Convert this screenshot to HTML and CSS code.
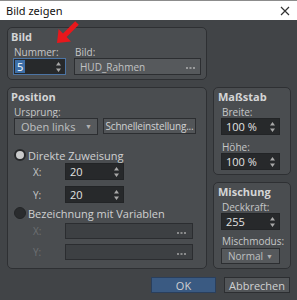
FILE: index.html
```html
<!DOCTYPE html>
<html lang="de">
<head>
  <meta charset="UTF-8">
  <title>Bild zeigen</title>
  <link rel="stylesheet" href="styles.css">
</head>
<body>
  <div class="window">
    <div class="titlebar">
      <span class="title">Bild zeigen</span>
      <svg class="close" width="10" height="10" viewBox="0 0 10 10"><path d="M1 1 L9 9 M9 1 L1 9" stroke="#333" stroke-width="1.2"/></svg>
    </div>

    <div class="content">
      <div class="columns">
        <div class="col-left">
          <section class="group group-bild">
            <div class="group-title">Bild</div>
            <div class="bild-row">
              <div class="nummer-col">
                <div class="label">Nummer:</div>
                <div class="spin spin-focus">
                  <span class="sel">5</span>
                  <svg class="spin-arrows" width="5" height="10" viewBox="0 0 5 10"><path d="M2.5 0 L5 3.5 L0 3.5 Z M2.5 10 L5 6.5 L0 6.5 Z" fill="#a8a8a8"/></svg>
                </div>
              </div>
              <div class="bild-col">
                <div class="label">Bild:</div>
                <div class="picker"><span>HUD_Rahmen</span>
                  <svg class="dots" width="9" height="2" viewBox="0 0 9 2"><path d="M0 0h2v2H0zM3.5 0h2v2h-2zM7 0h2v2H7z" fill="#9a9b9c"/></svg>
                </div>
              </div>
            </div>
          </section>

          <section class="group group-position">
            <div class="group-title">Position</div>
            <div class="label">Ursprung:</div>
            <div class="pos-row">
              <div class="combo combo-origin"><span>Oben links</span><span class="caret">▼</span></div>
              <div class="btn btn-quick">Schnelleinstellung...</div>
            </div>

            <div class="radio-row radio-first">
              <span class="radio radio-on"></span>
              <span>Direkte Zuweisung</span>
            </div>
            <div class="coord-row coord-x">
              <span class="coord-label">X:</span>
              <div class="spin spin-coord"><span>20</span>
                <svg class="spin-arrows" width="5" height="10" viewBox="0 0 5 10"><path d="M2.5 0 L5 3.5 L0 3.5 Z M2.5 10 L5 6.5 L0 6.5 Z" fill="#a8a8a8"/></svg>
              </div>
            </div>
            <div class="coord-row coord-y">
              <span class="coord-label">Y:</span>
              <div class="spin spin-coord"><span>20</span>
                <svg class="spin-arrows" width="5" height="10" viewBox="0 0 5 10"><path d="M2.5 0 L5 3.5 L0 3.5 Z M2.5 10 L5 6.5 L0 6.5 Z" fill="#a8a8a8"/></svg>
              </div>
            </div>

            <div class="radio-row radio-second">
              <span class="radio radio-off"></span>
              <span>Bezeichnung mit Variablen</span>
            </div>
            <div class="coord-row coord-vx">
              <span class="coord-label disabled">X:</span>
              <div class="var-field">
                <svg class="dots" width="9" height="2" viewBox="0 0 9 2"><path d="M0 0h2v2H0zM3.5 0h2v2h-2zM7 0h2v2H7z" fill="#8a8b8c"/></svg>
              </div>
            </div>
            <div class="coord-row coord-vy">
              <span class="coord-label disabled">Y:</span>
              <div class="var-field">
                <svg class="dots" width="9" height="2" viewBox="0 0 9 2"><path d="M0 0h2v2H0zM3.5 0h2v2h-2zM7 0h2v2H7z" fill="#8a8b8c"/></svg>
              </div>
            </div>
          </section>
        </div>

        <div class="col-right">
          <section class="group group-scale">
            <div class="group-title">Maßstab</div>
            <div class="label">Breite:</div>
            <div class="spin spin-side"><span>100 %</span>
              <svg class="spin-arrows" width="5" height="10" viewBox="0 0 5 10"><path d="M2.5 0 L5 3.5 L0 3.5 Z M2.5 10 L5 6.5 L0 6.5 Z" fill="#a8a8a8"/></svg>
            </div>
            <div class="label label-gap">Höhe:</div>
            <div class="spin spin-side"><span>100 %</span>
              <svg class="spin-arrows" width="5" height="10" viewBox="0 0 5 10"><path d="M2.5 0 L5 3.5 L0 3.5 Z M2.5 10 L5 6.5 L0 6.5 Z" fill="#a8a8a8"/></svg>
            </div>
          </section>

          <section class="group group-blend">
            <div class="group-title">Mischung</div>
            <div class="label">Deckkraft:</div>
            <div class="spin spin-side"><span>255</span>
              <svg class="spin-arrows" width="5" height="10" viewBox="0 0 5 10"><path d="M2.5 0 L5 3.5 L0 3.5 Z M2.5 10 L5 6.5 L0 6.5 Z" fill="#a8a8a8"/></svg>
            </div>
            <div class="label label-gap-small">Mischmodus:</div>
            <div class="combo combo-blend"><span>Normal</span><span class="caret">▼</span></div>
          </section>
        </div>
      </div>

      <div class="buttons">
        <div class="btn btn-ok">OK</div>
        <div class="btn btn-cancel">Abbrechen</div>
      </div>
    </div>

    <!-- red pointer over the Nummer field -->
    <svg class="pointer" width="297" height="60" viewBox="0 0 297 60">
      <path d="M57 43 L58.6 29 L63 33.4 L75.2 21.2 L78.8 24.8 L66.6 37 L71 41.4 Z" fill="#e8181c"/>
    </svg>
  </div>
</body>
</html>
```

FILE: styles.css
```css
* {
    box-sizing: border-box;
}
body {
    margin: 0;
    font-family: "Open Sans", "Noto Sans", sans-serif;
    font-size: 10px;
    color: #c6c7c8;
    background: #414447;
}
.window {
    position: relative;
    width: 297px;
    height: 300px;
    overflow: hidden;
}
.titlebar {
    height: 20px;
    background: #fff;
    border-top: 1px solid #8c8c8c;
    display: flex;
    align-items: center;
    justify-content: space-between;
    padding: 0 7px 0 6px;
    font-family: "Noto Sans", sans-serif;
    font-size: 11px;
    color: #111;
}
.content {
    padding: 7px 7px 0 7px;
}
.columns {
    display: flex;
    gap: 6px;
    height: 242px;
}
.col-left {
    width: 203px;
    display: flex;
    flex-direction: column;
    gap: 7px;
}
.col-right {
    flex: 1;
    display: flex;
    flex-direction: column;
    gap: 7px;
    padding-top: 60px;
}
.group {
    background: #4a4d50;
    border: 1px solid #2e3033;
    border-radius: 5px;
    padding: 2px 5px 0 5px;
}
.group-title {
    height: 14px;
    line-height: 14px;
    font-size: 11px;
    font-weight: 700;
    margin-left: -2px;
    color: #d4d5d6;
}
.label {
    height: 12px;
    line-height: 12px;
    margin-top: 2px;
    padding-left: 1px;
}
.label-gap {
    margin-top: 6px;
}
.label-gap-small {
    margin-top: 5px;
}

/* Bild */
.group-bild {
    height: 53px;
}
.bild-row {
    display: flex;
    gap: 8px;
}
.nummer-col {
    width: 53px;
}
.bild-col {
    width: 127px;
}
.spin {
    position: relative;
    height: 17px;
    background: #27292b;
    border: 1px solid #222426;
    display: flex;
    align-items: center;
    padding-left: 4px;
    color: #e2e2e2;
    font-size: 11px;
}
.spin-arrows {
    position: absolute;
    right: 4px;
    top: 3px;
}
.spin-focus {
    border-color: #4c74a4;
    padding-left: 1px;
}
.sel {
    background: #3d6fa8;
    color: #fff;
    padding: 0 2px;
    line-height: 13px;
}
.picker {
    height: 17px;
    background: #56595c;
    border: 1px solid #2c2e31;
    display: flex;
    align-items: center;
    justify-content: space-between;
    padding: 0 5px 0 5px;
    color: #c2c3c4;
}
.dots {
    margin-top: 3px;
}

/* Position */
.group-position {
    flex: 1;
}
.pos-row {
    display: flex;
    gap: 5px;
    align-items: flex-start;
}
.combo {
    height: 17px;
    background: #56595c;
    border: 1px solid #2c2e31;
    display: flex;
    align-items: center;
    justify-content: space-between;
    padding: 0 5px 0 6px;
    color: #bfc0c1;
    font-size: 11px;
}
.combo-origin {
    width: 84px;
    margin-left: 1px;
}
.caret {
    font-size: 7px;
    color: #b0b1b2;
}
.btn {
    display: flex;
    align-items: center;
    justify-content: center;
    border: 1px solid #2c2e31;
    background: #525558;
    color: #d0d1d2;
    font-size: 11px;
}
.btn-quick {
    width: 93px;
    height: 16px;
    font-size: 10px;
    letter-spacing: -0.2px;
    white-space: nowrap;
}
.radio-row {
    display: flex;
    align-items: center;
    gap: 2px;
    height: 14px;
    font-size: 11px;
    color: #cfd0d1;
}
.radio-first {
    margin-top: 13px;
}
.radio-second {
    margin-top: 3px;
}
.radio {
    width: 12px;
    height: 12px;
    border-radius: 50%;
    margin-left: 1px;
}
.radio-on {
    background: #c9cacb;
    border: 2px solid #26282a;
}
.radio-off {
    background: #2a2c2e;
    border: 1px solid #232527;
}
.coord-row {
    display: flex;
    align-items: center;
}
.coord-label {
    width: 52px;
    padding-left: 20px;
}
.disabled {
    color: #6c6f72;
}
.coord-x {
    margin-top: 1px;
}
.coord-y {
    margin-top: 6px;
}
.coord-vx {
    margin-top: 3px;
}
.coord-vy {
    margin-top: 5px;
}
.spin-coord {
    width: 59px;
}
.var-field {
    width: 128px;
    height: 16px;
    background: #3d4043;
    border: 1px solid #2b2d30;
    display: flex;
    align-items: center;
    justify-content: flex-end;
    padding-right: 6px;
}

/* right column */
.group-scale {
    height: 88px;
    padding-left: 6px;
    padding-right: 6px;
}
.group-blend {
    flex: 1;
    padding-left: 6px;
    padding-right: 6px;
}
.group-scale .label,
.group-blend .label {
    padding-left: 2px;
}
.spin-side {
    width: 59px;
    margin-left: 1px;
}
.combo-blend {
    width: 59px;
    height: 16px;
    margin-top: 1px;
    margin-left: 1px;
    font-size: 10px;
    padding: 0 6px 0 6px;
}

/* footer buttons */
.buttons {
    display: flex;
    justify-content: flex-end;
    gap: 8px;
    margin-top: 8px;
}
.btn-ok {
    width: 65px;
    height: 16px;
    background: #3a5a82;
    border-color: #2a3f5c;
}
.btn-cancel {
    width: 66px;
    height: 16px;
}

.pointer {
    position: absolute;
    left: 0;
    top: 0;
}
```
